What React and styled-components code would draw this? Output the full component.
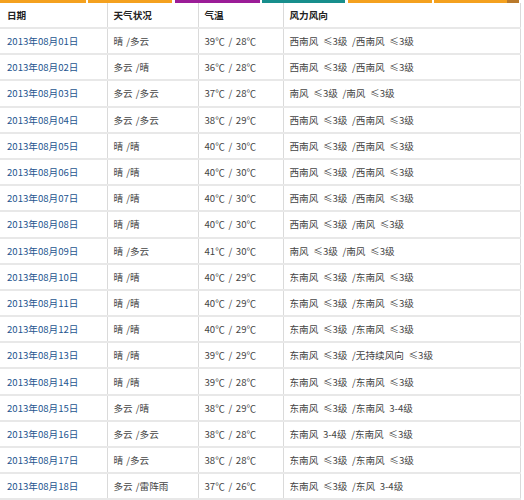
import React from "react";
import styled, { createGlobalStyle } from "styled-components";

const Global = createGlobalStyle`
  html, body { margin: 0; padding: 0; background: #fff; }
  body { font-family: "SimSun", "Noto Sans CJK SC", "DejaVu Sans", sans-serif; }
`;

const Page = styled.div`
  width: 524px;
  overflow: hidden;
`;

const Strip = styled.div`
  display: flex;
  height: 3px;
  width: 519px;
`;

const Seg = styled.div`
  width: ${(p) => p.$w}px;
  margin-left: ${(p) => p.$gap || 0}px;
  background: ${(p) => p.$c};
`;

const Table = styled.table`
  border-collapse: collapse;
  table-layout: fixed;
  width: 520px;
  font-size: 9.6px;
  color: #444;
`;

const HeadCell = styled.th`
  height: 23px;
  padding: 0 0 1px ${(p) => (p.$first ? 7 : 6)}px;
  text-align: left;
  font-weight: bold;
  color: #222;
  border-right: 1px solid #dadada;
  border-bottom: 2px solid #e8e8e8;
`;

const Cell = styled.td`
  height: 24.2px;
  padding: 0 0 0 ${(p) => (p.$first ? 7 : 6)}px;
  white-space: nowrap;
  word-spacing: ${(p) => p.$ws || 0}px;
  color: ${(p) => (p.$link ? "#24558f" : "#444")};
  border-right: 1px solid #dadada;
  border-bottom: 2px solid #e8e8e8;
`;

const rows = [
  ["01", "晴 /多云", "39℃ / 28℃", "西南风 ≤3级 /西南风 ≤3级"],
  ["02", "多云 /晴", "36℃ / 28℃", "西南风 ≤3级 /西南风 ≤3级"],
  ["03", "多云 /多云", "37℃ / 28℃", "南风 ≤3级 /南风 ≤3级"],
  ["04", "多云 /多云", "38℃ / 29℃", "西南风 ≤3级 /西南风 ≤3级"],
  ["05", "晴 /晴", "40℃ / 30℃", "西南风 ≤3级 /西南风 ≤3级"],
  ["06", "晴 /晴", "40℃ / 30℃", "西南风 ≤3级 /西南风 ≤3级"],
  ["07", "晴 /晴", "40℃ / 30℃", "西南风 ≤3级 /西南风 ≤3级"],
  ["08", "晴 /晴", "40℃ / 30℃", "西南风 ≤3级 /南风 ≤3级"],
  ["09", "晴 /多云", "41℃ / 30℃", "南风 ≤3级 /南风 ≤3级"],
  ["10", "晴 /晴", "40℃ / 29℃", "东南风 ≤3级 /东南风 ≤3级"],
  ["11", "晴 /晴", "40℃ / 29℃", "东南风 ≤3级 /东南风 ≤3级"],
  ["12", "晴 /晴", "40℃ / 29℃", "东南风 ≤3级 /东南风 ≤3级"],
  ["13", "晴 /晴", "39℃ / 29℃", "东南风 ≤3级 /无持续风向 ≤3级"],
  ["14", "晴 /晴", "39℃ / 28℃", "东南风 ≤3级 /东南风 ≤3级"],
  ["15", "多云 /晴", "38℃ / 29℃", "东南风 ≤3级 /东南风 3-4级"],
  ["16", "多云 /多云", "38℃ / 28℃", "东南风 3-4级 /东南风 ≤3级"],
  ["17", "晴 /多云", "38℃ / 28℃", "东南风 ≤3级 /东南风 ≤3级"],
  ["18", "多云 /雷阵雨", "37℃ / 26℃", "东南风 ≤3级 /东风 3-4级"],
];

const segs = [
  { w: 86, c: "#f4a11f" },
  { w: 84, c: "#f4a11f", gap: 2 },
  { w: 85, c: "#9b1d97", gap: 3 },
  { w: 83, c: "#178e8c", gap: 2 },
  { w: 84, c: "#f4a11f", gap: 3 },
  { w: 73, c: "#f4a11f", gap: 2 },
  { w: 12, c: "#b9792c" },
];

export default function App() {
  return (
    <Page>
      <Global />
      <Strip>
        {segs.map((s, i) => (
          <Seg key={i} $w={s.w} $c={s.c} $gap={s.gap} />
        ))}
      </Strip>
      <Table>
        <colgroup>
          <col style={{ width: 107 }} />
          <col style={{ width: 91 }} />
          <col style={{ width: 85 }} />
          <col style={{ width: 237 }} />
        </colgroup>
        <thead>
          <tr>
            <HeadCell $first>日期</HeadCell>
            <HeadCell>天气状况</HeadCell>
            <HeadCell>气温</HeadCell>
            <HeadCell>风力风向</HeadCell>
          </tr>
        </thead>
        <tbody>
          {rows.map((r) => (
            <tr key={r[0]}>
              <Cell $first $link>{`2013年08月${r[0]}日`}</Cell>
              <Cell $ws={1}>{r[1]}</Cell>
              <Cell $ws={1.5}>{r[2]}</Cell>
              <Cell $ws={2.5}>{r[3]}</Cell>
            </tr>
          ))}
        </tbody>
      </Table>
    </Page>
  );
}
